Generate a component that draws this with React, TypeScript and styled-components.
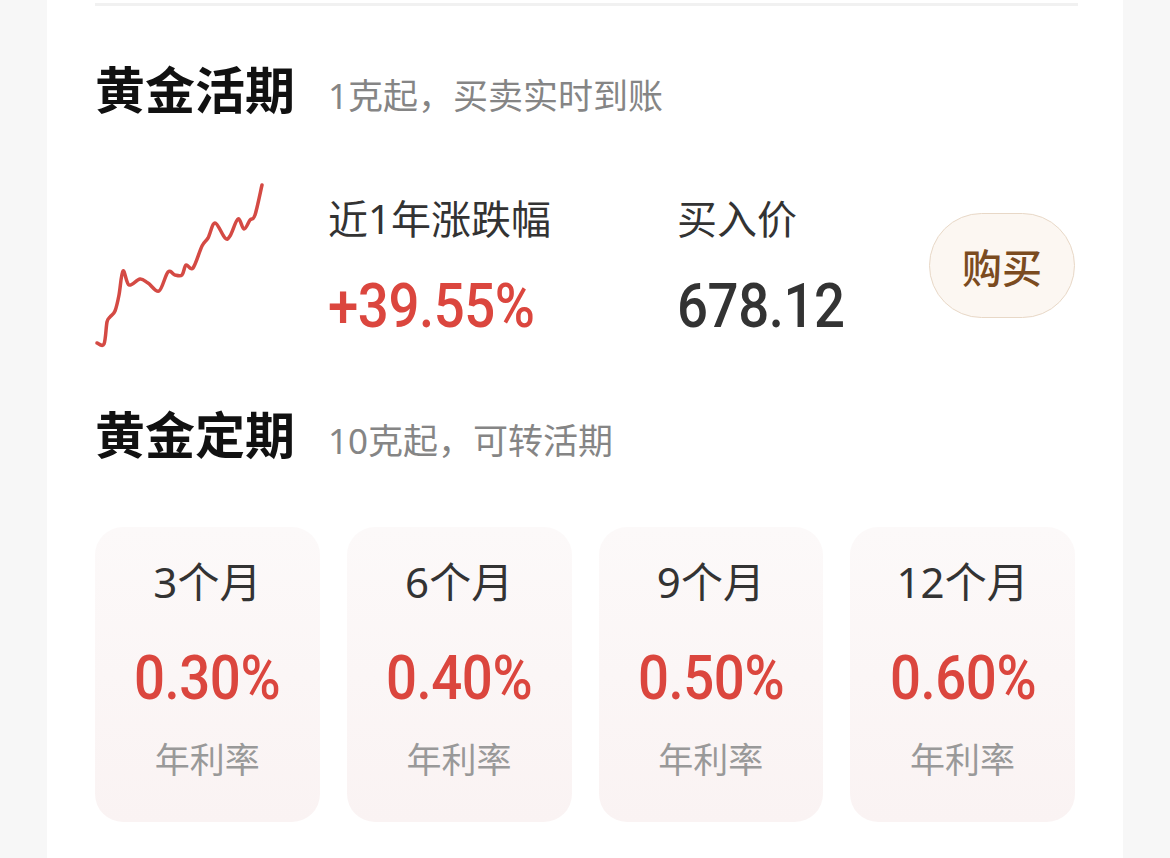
import * as React from 'react';
import styled, { createGlobalStyle } from 'styled-components';

const GlobalStyle = createGlobalStyle`
  html, body {
    margin: 0;
    padding: 0;
    background: #f7f7f7;
  }
  body {
    font-family: "Noto Sans", "Noto Sans CJK SC", sans-serif;
  }
`;

const NUM_FONT = `Roboto, "DejaVu Sans Condensed", sans-serif`;
const RED = '#db463e';

const Page = styled.div`
  margin: 0 47px;
  min-height: 858px;
  background: #fff;
  padding: 3px 48px 0;
  box-sizing: border-box;
`;

const Divider = styled.div`
  height: 3px;
  background: #f1f1f1;
  margin-right: -3px;
`;

const Header = styled.div<{ $top: number }>`
  display: flex;
  align-items: baseline;
  gap: 33px;
  margin-top: ${(p) => p.$top}px;
`;

const Title = styled.h2`
  margin: 0;
  font-size: 50px;
  line-height: 50px;
  font-weight: 700;
  color: #111;
`;

const Subtitle = styled.span`
  font-size: 35px;
  line-height: 36px;
  color: #858585;
`;

const StatsRow = styled.div`
  display: flex;
  align-items: center;
  height: 163px;
  margin-top: 69px;
`;

const Chart = styled.svg`
  width: 170px;
  height: 165px;
  flex: none;
  display: block;
  margin-right: 63px;
`;

const Stat = styled.div<{ $width: number }>`
  width: ${(p) => p.$width}px;
  display: flex;
  flex-direction: column;
  gap: 36px;
  padding-top: 4px;
`;

const StatLabel = styled.div`
  font-size: 40px;
  line-height: 40px;
  color: #333;
`;

const Digits = styled.span<{ $color: string; $origin: string }>`
  display: inline-block;
  font-family: ${NUM_FONT};
  font-size: 62px;
  line-height: 62px;
  font-weight: 500;
  letter-spacing: -0.5px;
  color: ${(p) => p.$color};
  transform: scaleX(0.88);
  transform-origin: ${(p) => p.$origin};
`;

const BuyButton = styled.button`
  margin-left: auto;
  width: 146px;
  height: 105px;
  border-radius: 53px;
  border: 1.5px solid #e8d8c7;
  background: #fcf7f2;
  color: #7b4b20;
  font-family: "Noto Sans CJK SC", sans-serif;
  font-size: 40px;
  font-weight: 500;
  padding: 0;
`;

const CardGrid = styled.div`
  display: grid;
  grid-template-columns: repeat(4, 1fr);
  gap: 27px;
  margin-top: 67px;
`;

const Card = styled.div`
  height: 295px;
  border-radius: 28px;
  background: linear-gradient(180deg, #fcf9f9 0%, #faf3f3 100%);
  display: flex;
  flex-direction: column;
  align-items: center;
  box-sizing: border-box;
  padding-top: 33px;
`;

const Term = styled.div`
  font-size: 42px;
  line-height: 44px;
  color: #333;
`;

const Rate = styled.div`
  margin-top: 43px;
  height: 62px;
`;

const RateLabel = styled.div`
  margin-top: 33px;
  font-size: 35px;
  line-height: 36px;
  color: #999;
`;

const points: [number, number][] = [
  [2, 160], [9, 161], [12, 139], [15, 134], [20, 128], [24, 112], [28, 88],
  [34, 102], [45, 96], [53, 100], [64, 108], [73, 89], [80, 92], [87, 92],
  [91, 82], [98, 85], [107, 63], [113, 55], [120, 40], [130, 55], [135, 53],
  [143, 36], [149, 46], [155, 37], [160, 32], [167, 2],
];

const smoothPath = (pts: [number, number][]) => {
  let d = `M${pts[0][0]},${pts[0][1]}`;
  for (let i = 0; i < pts.length - 1; i++) {
    const p0 = pts[i - 1] || pts[i];
    const p1 = pts[i];
    const p2 = pts[i + 1];
    const p3 = pts[i + 2] || p2;
    const c1x = p1[0] + (p2[0] - p0[0]) / 6;
    const c1y = p1[1] + (p2[1] - p0[1]) / 6;
    const c2x = p2[0] - (p3[0] - p1[0]) / 6;
    const c2y = p2[1] - (p3[1] - p1[1]) / 6;
    d += ` C${c1x.toFixed(1)},${c1y.toFixed(1)} ${c2x.toFixed(1)},${c2y.toFixed(1)} ${p2[0]},${p2[1]}`;
  }
  return d;
};

const terms = [
  { term: '3个月', rate: '0.30%' },
  { term: '6个月', rate: '0.40%' },
  { term: '9个月', rate: '0.50%' },
  { term: '12个月', rate: '0.60%' },
];

export default function App() {
  return (
    <>
      <GlobalStyle />
      <Page>
        <Divider />
        <Header $top={59}>
          <Title>黄金活期</Title>
          <Subtitle>1克起，买卖实时到账</Subtitle>
        </Header>
        <StatsRow>
          <Chart viewBox="0 0 170 165">
            <path
              d={smoothPath(points)}
              fill="none"
              stroke="#d44a44"
              strokeWidth={3.5}
              strokeLinecap="round"
              strokeLinejoin="round"
            />
          </Chart>
          <Stat $width={349}>
            <StatLabel>近1年涨跌幅</StatLabel>
            <div>
              <Digits $color={RED} $origin="left center">+39.55%</Digits>
            </div>
          </Stat>
          <Stat $width={240}>
            <StatLabel>买入价</StatLabel>
            <div>
              <Digits $color="#333" $origin="left center">678.12</Digits>
            </div>
          </Stat>
          <BuyButton>购买</BuyButton>
        </StatsRow>
        <Header $top={63}>
          <Title>黄金定期</Title>
          <Subtitle>10克起，可转活期</Subtitle>
        </Header>
        <CardGrid>
          {terms.map((t) => (
            <Card key={t.term}>
              <Term>{t.term}</Term>
              <Rate>
                <Digits $color={RED} $origin="center">{t.rate}</Digits>
              </Rate>
              <RateLabel>年利率</RateLabel>
            </Card>
          ))}
        </CardGrid>
      </Page>
    </>
  );
}
